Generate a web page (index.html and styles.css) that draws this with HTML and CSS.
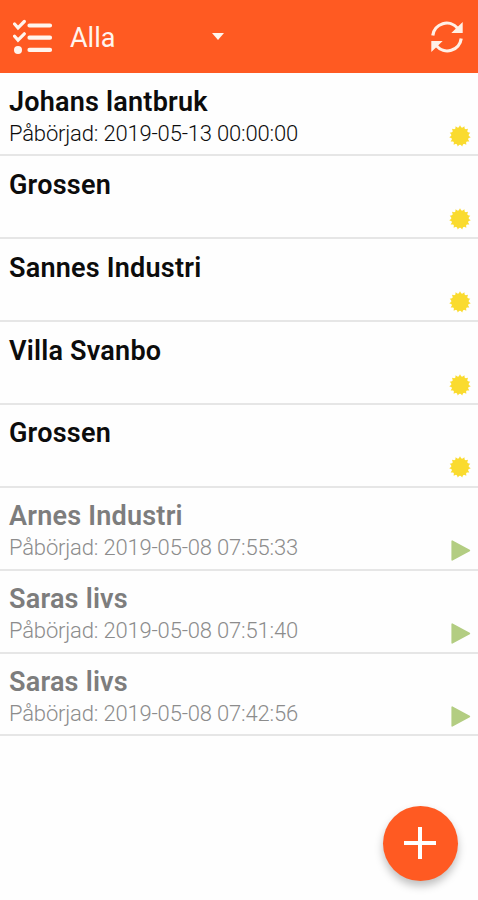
FILE: index.html
```
<!DOCTYPE html>
<html lang="sv">
<head>
  <meta charset="UTF-8">
  <meta name="viewport" content="width=device-width, initial-scale=1">
  <title>Alla</title>
  <link rel="stylesheet" href="styles.css">
</head>

<body>

  <svg class="defs" width="0" height="0">
    <symbol id="icon-new" viewBox="-11 -11 22 22">
      <g fill="#fadb2f">
        <circle r="8.7"/>
        <path id="rays" d="M0-10.8L9.35 5.4H-9.35Z"/>
        <use href="#rays" transform="rotate(24)"/>
        <use href="#rays" transform="rotate(48)"/>
        <use href="#rays" transform="rotate(72)"/>
        <use href="#rays" transform="rotate(96)"/>
      </g>
    </symbol>
    <symbol id="icon-play" viewBox="0 0 22 22">
      <path d="M3.2 2.1V20.9L20.4 11.5Z" fill="#b3cd82" stroke="#b3cd82" stroke-width="1.6" stroke-linejoin="round"/>
    </symbol>
  </svg>

  <header class="toolbar">
    <svg class="list-icon" width="40" height="36" viewBox="0 0 40 36" fill="none" stroke="#fff5ee" stroke-linecap="round">
      <path d="M16.5 6.5H37M16.5 18.7H37M16.5 30.9H37" stroke-width="4.2"/>
      <path d="M1.6 5L5 8.8L11.3 2.5M1.6 17.3L5 21.1L11.3 14.8" stroke-width="3.2"/>
      <circle cx="5" cy="30.9" r="4" fill="#fff5ee" stroke="none"/>
    </svg>
    <span class="filter-name">Alla</span>
    <span class="caret"></span>
    <svg class="refresh" width="34" height="34" viewBox="0 0 34 34" fill="none" stroke="#fff0e6" stroke-width="3.2">
      <path d="M2.8 15.5A14 14 0 0 1 27.5 8.2M31.2 18.5A14 14 0 0 1 6.5 25.8"/>
      <path d="M32.7 2V13H21.3ZM1.3 32V21H12.7Z" fill="#fff0e6" stroke="none"/>
    </svg>
  </header>

  <ul class="orders">
    <li>
      <div>
        <h2>Johans lantbruk</h2>
        <p>Påbörjad: 2019-05-13 00:00:00</p>
      </div>
      <svg class="status"><use href="#icon-new"/></svg>
    </li>
    <li>
      <h2>Grossen</h2>
      <svg class="status"><use href="#icon-new"/></svg>
    </li>
    <li>
      <h2>Sannes Industri</h2>
      <svg class="status"><use href="#icon-new"/></svg>
    </li>
    <li>
      <h2>Villa Svanbo</h2>
      <svg class="status"><use href="#icon-new"/></svg>
    </li>
    <li>
      <h2>Grossen</h2>
      <svg class="status"><use href="#icon-new"/></svg>
    </li>
    <li class="started">
      <div>
        <h2>Arnes Industri</h2>
        <p>Påbörjad: 2019-05-08 07:55:33</p>
      </div>
      <svg class="status"><use href="#icon-play"/></svg>
    </li>
    <li class="started">
      <div>
        <h2>Saras livs</h2>
        <p>Påbörjad: 2019-05-08 07:51:40</p>
      </div>
      <svg class="status"><use href="#icon-play"/></svg>
    </li>
    <li class="started">
      <div>
        <h2>Saras livs</h2>
        <p>Påbörjad: 2019-05-08 07:42:56</p>
      </div>
      <svg class="status"><use href="#icon-play"/></svg>
    </li>
  </ul>

  <button class="add" aria-label="Lägg till">
    <svg width="32" height="32" viewBox="0 0 32 32" stroke="#fff" stroke-width="4">
      <path d="M16 0V32M0 16H32"/>
    </svg>
  </button>

</body>
</html>
```
FILE: styles.css
```
body {
  font-family: Roboto, sans-serif;
  margin: 0;
  height: 100vh;
  overflow: hidden;
  background: #fefefe;
  color: #0c0c0c;
}

.defs {
  position: absolute;
}

.toolbar {
  display: flex;
  align-items: center;
  height: 73px;
  padding: 0 14px 0 13px;
  box-sizing: border-box;
  background: #ff5a22;
  color: #fff5ee;
}

.filter-name {
  margin-left: 17px;
  width: 142px;
  font-size: 27px;
  line-height: 32px;
  padding-top: 2px;
}

.caret {
  border: 6.5px solid transparent;
  border-top: 7px solid #fff5ee;
  border-bottom: 0;
}

.refresh {
  margin-left: auto;
}

.orders {
  list-style: none;
  margin: 0;
  padding: 0.6px 0 0;
}

.orders li {
  display: flex;
  justify-content: space-between;
  height: 82.86px;
  padding: 11.4px 7px 0 9px;
  box-sizing: border-box;
  border-bottom: 2px solid #e6e6e6;
}

.orders h2 {
  margin: 0;
  font-size: 27px;
  font-weight: 600;
  line-height: 34px;
  letter-spacing: 0.22px;
}

.orders p {
  margin: 0;
  font-size: 22px;
  font-weight: 300;
  line-height: 29px;
  letter-spacing: -0.18px;
}

.orders .started {
  color: #7d7d7d;
}

.started p {
  color: #8c8c8c;
}

.status {
  width: 22px;
  height: 22px;
  margin-top: 40px;
}

.add {
  position: absolute;
  right: 20.5px;
  bottom: 19.5px;
  width: 75px;
  height: 75px;
  padding: 0;
  display: flex;
  align-items: center;
  justify-content: center;
  border: none;
  border-radius: 50%;
  background: #ff5a22;
  box-shadow: 0 5px 9px rgba(0, 0, 0, 0.25);
}
```
